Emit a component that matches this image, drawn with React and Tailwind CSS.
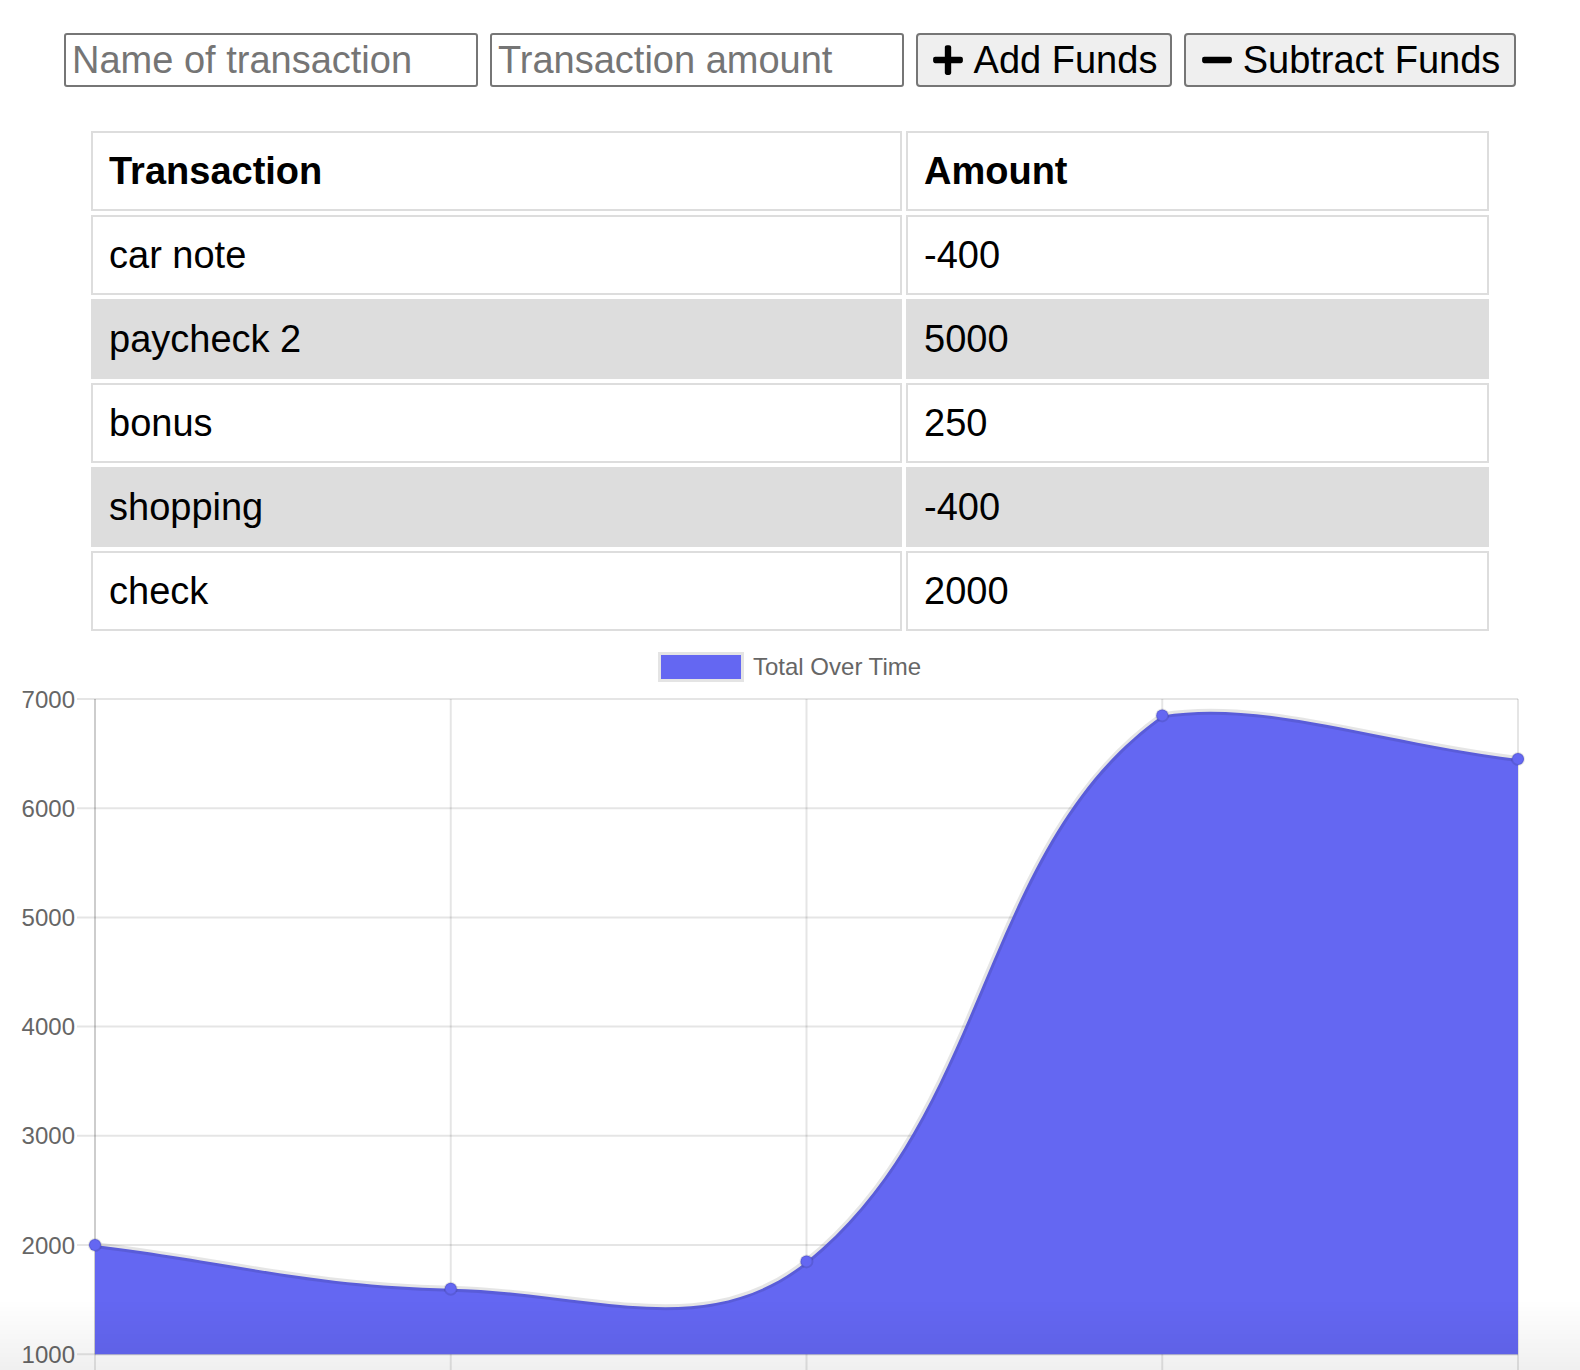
import React from 'react';
import { FaPlus, FaMinus } from 'react-icons/fa';

const transactions = [
  { name: 'car note', amount: -400 },
  { name: 'paycheck 2', amount: 5000 },
  { name: 'bonus', amount: 250 },
  { name: 'shopping', amount: -400 },
  { name: 'check', amount: 2000 },
];

// running total, oldest first
const totals = (() => {
  let sum = 0;
  return [...transactions].reverse().map((t) => (sum += t.amount));
})();

// chart area (svg coords)
const LEFT = 95;
const RIGHT = 1518;
const TOP = 64;
const STEP = 109.2;
const BOTTOM = TOP + 6 * STEP;
const ticks = [7000, 6000, 5000, 4000, 3000, 2000, 1000];
const yOf = (v) => TOP + ((7000 - v) / 1000) * STEP;
const xStep = (RIGHT - LEFT) / 4;

const points = totals.map((v, i) => ({ x: LEFT + i * xStep, y: yOf(v) }));

const clamp = (v, a, b) => Math.max(a, Math.min(b, v));

// chart.js style spline control points, tension 0.4
const controls = points.map((cur, i) => {
  const prev = points[i - 1] || cur;
  const next = points[i + 1] || cur;
  const d01 = Math.hypot(cur.x - prev.x, cur.y - prev.y);
  const d12 = Math.hypot(next.x - cur.x, next.y - cur.y);
  let s01 = d01 / (d01 + d12);
  let s12 = d12 / (d01 + d12);
  if (isNaN(s01)) s01 = 0;
  if (isNaN(s12)) s12 = 0;
  const fa = 0.4 * s01;
  const fb = 0.4 * s12;
  return {
    prev: {
      x: clamp(cur.x - fa * (next.x - prev.x), LEFT, RIGHT),
      y: clamp(cur.y - fa * (next.y - prev.y), TOP, BOTTOM),
    },
    next: {
      x: clamp(cur.x + fb * (next.x - prev.x), LEFT, RIGHT),
      y: clamp(cur.y + fb * (next.y - prev.y), TOP, BOTTOM),
    },
  };
});

let linePath = `M ${points[0].x} ${points[0].y}`;
for (let i = 1; i < points.length; i++) {
  const a = controls[i - 1].next;
  const b = controls[i].prev;
  linePath += ` C ${a.x} ${a.y} ${b.x} ${b.y} ${points[i].x} ${points[i].y}`;
}
const fillPath = `${linePath} L ${RIGHT} ${BOTTOM} L ${LEFT} ${BOTTOM} Z`;

const BLUE = '#6467f2';
const GRID = 'rgba(0,0,0,0.1)';

const Chart = () => (
  <svg width="1580" height="760" className="block" fontFamily="'Liberation Sans', Arial, sans-serif">
    {/* legend */}
    <rect x="659.5" y="18.5" width="83" height="27" fill={BLUE} stroke="#e4e4e4" strokeWidth="3" />
    <text x="753" y="40" fontSize="24" fill="#666">Total Over Time</text>

    {/* horizontal grid + y labels */}
    {ticks.map((t) => (
      <g key={t}>
        <line x1="77" x2={RIGHT} y1={yOf(t)} y2={yOf(t)} stroke={GRID} strokeWidth="2" />
        <text x="75" y={yOf(t) + 8.5} fontSize="24" fill="#666" textAnchor="end">{t}</text>
      </g>
    ))}

    {/* vertical grid */}
    {points.map((p, i) => (
      <line key={i} x1={p.x} x2={p.x} y1={TOP} y2={BOTTOM + 20} stroke={GRID} strokeWidth="2" />
    ))}

    {/* axis borders */}
    <line x1={LEFT} x2={LEFT} y1={TOP} y2={BOTTOM} stroke={GRID} strokeWidth="2" />
    <line x1={LEFT} x2={RIGHT} y1={BOTTOM} y2={BOTTOM} stroke={GRID} strokeWidth="2" />

    {/* data */}
    <path d={fillPath} fill={BLUE} />
    <path d={linePath} fill="none" stroke={GRID} strokeWidth="6" />
    {points.map((p, i) => (
      <circle key={i} cx={p.x} cy={p.y} r="6" fill={BLUE} stroke={GRID} strokeWidth="2" />
    ))}
  </svg>
);

export default function App() {
  return (
    <div className="relative min-h-screen bg-white font-['Liberation_Sans',Arial,sans-serif] text-black">
      {/* form */}
      <div className="flex justify-center gap-[12px] pt-[33px]">
        <input
          placeholder="Name of transaction"
          className="h-[54px] w-[414px] rounded-[3px] border-2 border-[#767676] bg-white px-[6px] text-[38px] text-black outline-none placeholder:text-[#757575]"
        />
        <input
          placeholder="Transaction amount"
          className="h-[54px] w-[414px] rounded-[3px] border-2 border-[#767676] bg-white px-[6px] text-[38px] text-black outline-none placeholder:text-[#757575]"
        />
        <button className="flex h-[54px] w-[256px] items-center justify-center gap-[9px] rounded-[4px] border-2 border-[#767676] bg-[#efefef] text-[38px] leading-none">
          <FaPlus size={34} />
          <span>Add Funds</span>
        </button>
        <button className="flex h-[54px] w-[332px] items-center justify-center gap-[9px] rounded-[4px] border-2 border-[#767676] bg-[#efefef] text-[38px] leading-none">
          <FaMinus size={34} />
          <span>Subtract Funds</span>
        </button>
      </div>

      {/* transactions */}
      <table className="mx-auto mt-[40px] w-[1406px] border-separate border-spacing-[4px] text-[38px]">
        <thead>
          <tr>
            <th className="w-[811px] border-2 border-[#ddd] px-[16px] py-[16px] text-left font-bold leading-[44px]">Transaction</th>
            <th className="border-2 border-[#ddd] px-[16px] py-[16px] text-left font-bold leading-[44px]">Amount</th>
          </tr>
        </thead>
        <tbody>
          {transactions.map((t, i) => (
            <tr key={i} className={i % 2 === 1 ? 'bg-[#ddd]' : 'bg-white'}>
              <td className="border-2 border-[#ddd] px-[16px] py-[16px] leading-[44px]">{t.name}</td>
              <td className="border-2 border-[#ddd] px-[16px] py-[16px] leading-[44px]">{t.amount}</td>
            </tr>
          ))}
        </tbody>
      </table>

      <Chart />

      {/* bottom window shadow */}
      <div className="pointer-events-none fixed inset-x-0 bottom-0 h-[70px] bg-linear-to-b from-transparent to-black/[0.06]" />
    </div>
  );
}
